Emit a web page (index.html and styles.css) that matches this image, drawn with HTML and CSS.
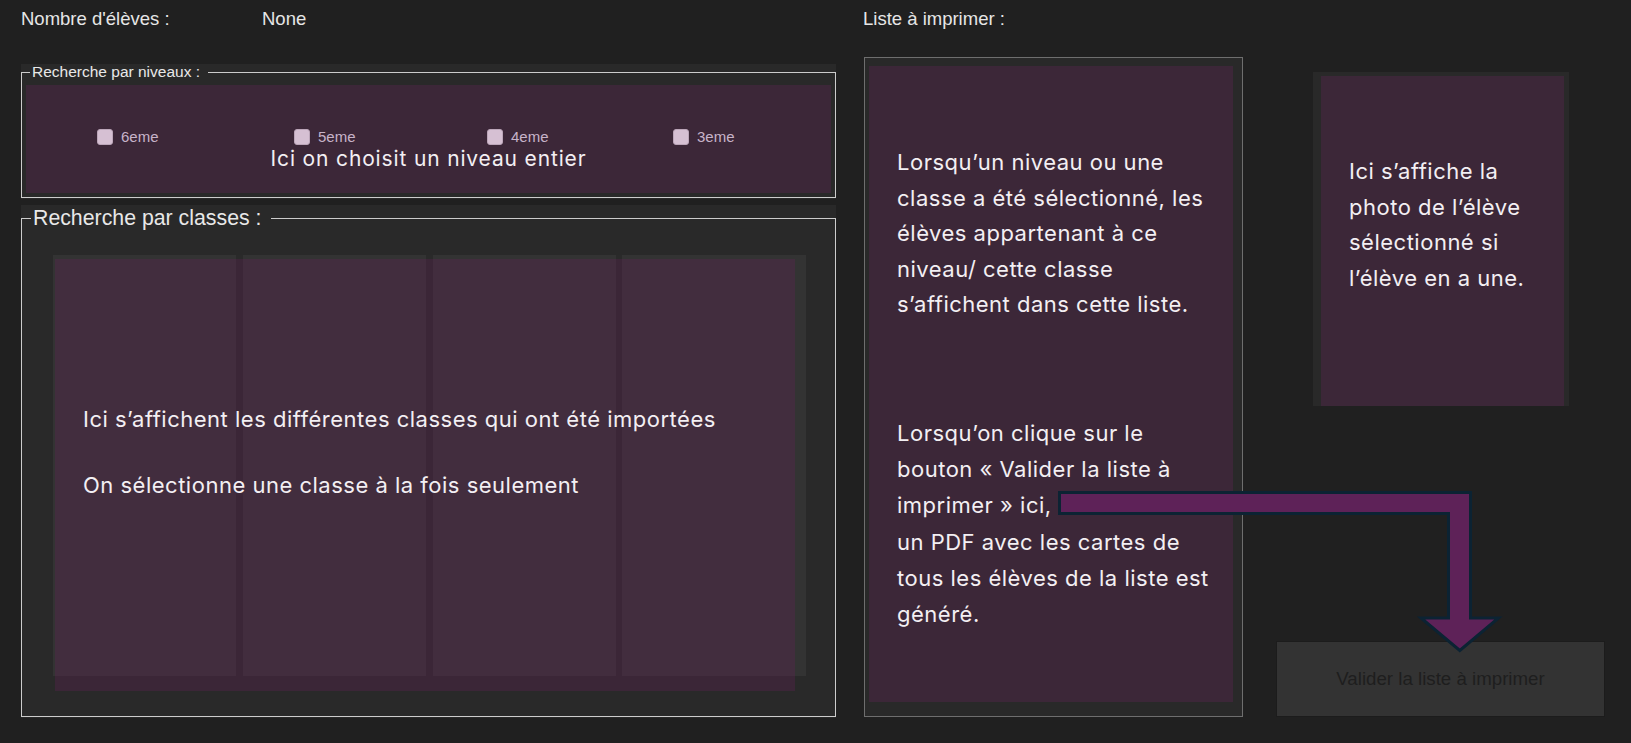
FILE: index.html
```html
<!DOCTYPE html>
<html lang="fr">
<head>
<meta charset="utf-8">
<title>Cartes élèves</title>
<link rel="stylesheet" href="styles.css">
</head>
<body>
<div class="app">
  <div class="left">
    <div class="info-row">
      <span class="info-label">Nombre d'élèves :</span>
      <span class="info-value">None</span>
    </div>
    <div class="section section-niv">
      <fieldset class="group group-niv">
        <legend class="legend-small">Recherche par niveaux :</legend>
        <div class="niv-panel">
          <div class="checks">
            <label class="check"><span class="box"></span>6eme</label>
            <label class="check"><span class="box"></span>5eme</label>
            <label class="check"><span class="box"></span>4eme</label>
            <label class="check"><span class="box"></span>3eme</label>
          </div>
          <p class="note note-niv">Ici on choisit un niveau entier</p>
        </div>
      </fieldset>
    </div>
    <div class="section section-cls">
      <fieldset class="group group-cls">
        <legend class="legend-big">Recherche par classes :</legend>
        <div class="class-list">
          <div class="class-col"></div>
          <div class="class-col"></div>
          <div class="class-col"></div>
          <div class="class-col"></div>
          <div class="class-overlay">
            <p class="note">Ici s’affichent les différentes classes qui ont été importées</p>
            <p class="note note-gap">On sélectionne une classe à la fois seulement</p>
          </div>
        </div>
      </fieldset>
    </div>
  </div>
  <div class="right">
    <div class="list-col">
      <div class="info-row info-row-right">
        <span class="info-label">Liste à imprimer :</span>
      </div>
      <div class="print-frame">
        <div class="print-panel">
          <p class="note">Lorsqu’un niveau ou une<br>classe a été sélectionné, les<br>élèves appartenant à ce<br>niveau/ cette classe<br>s’affichent dans cette liste.</p>
          <p class="note note-para">Lorsqu’on clique sur le<br>bouton « Valider la liste à<br>imprimer » ici,<br>un PDF avec les cartes de<br>tous les élèves de la liste est<br>généré.</p>
        </div>
      </div>
    </div>
    <div class="side-col">
      <div class="photo-frame">
        <div class="photo-panel">
          <p class="note">Ici s’affiche la<br>photo de l’élève<br>sélectionné si<br>l’élève en a une.</p>
        </div>
      </div>
      <button class="validate" type="button">Valider la liste à imprimer</button>
    </div>
  </div>
  <svg class="arrow" viewBox="0 0 1631 743" xmlns="http://www.w3.org/2000/svg" aria-hidden="true">
    <polygon points="1059.5,492.5 1470.5,492.5 1470.5,618 1498.5,618 1459.8,650.5 1421,618 1448.5,618 1448.5,513.5 1059.5,513.5" fill="#5e2258" stroke="#0c2333" stroke-width="3" stroke-linejoin="miter"/>
  </svg>
</div>
</body>
</html>
```

FILE: styles.css
```css
* { box-sizing: border-box; }
html, body { margin: 0; padding: 0; }
body {
  background: #202020;
  width: 1631px;
  height: 743px;
  overflow: hidden;
  font-family: "Liberation Sans", Arial, sans-serif;
  color: #e6e6e6;
}
.app {
  position: relative;
  display: flex;
  align-items: flex-start;
  padding-left: 21px;
  height: 743px;
}
.left {
  width: 815px;
  display: flex;
  flex-direction: column;
}
.info-row {
  height: 64px;
  padding-top: 8px;
  font-size: 18.5px;
  line-height: 21px;
  display: flex;
}
.info-row-right { height: 57px; }
.info-label { width: 241px; }

.section { background: #292929; }
.section-niv { height: 135px; }
.section-cls { height: 513px; margin-top: 6px; }

.group {
  margin: 0;
  border: 1px solid #cccccc;
  min-width: 0;
}
.group-niv { padding: 5px 4px 4px 4px; height: 134px; }
.group-cls { padding: 24px 8px 40px 8px; height: 512px; }

.legend-small {
  font-size: 15.5px;
  line-height: 16px;
  padding: 0 8px 0 2px;
  margin-left: 4px;
  color: #e8e8e8;
}
.legend-big {
  font-size: 21.3px;
  line-height: 26px;
  padding: 0 10px 0 2px;
  margin-left: 1px;
  color: #e8e8e8;
}

.niv-panel {
  background: #3c2738;
  height: 108px;
  padding-top: 42px;
}
.checks {
  display: grid;
  grid-template-columns: 197px 193px 186px auto;
  padding-left: 71px;
  height: 20px;
}
.check {
  display: flex;
  align-items: center;
  gap: 8px;
  font-size: 15px;
  line-height: 20px;
  color: #c7b3c9;
}
.box {
  width: 16px;
  height: 16px;
  border-radius: 3px;
  background: #d6c0d3;
  border: 1px solid #bca6b9;
}

.note {
  margin: 0;
  font-family: Inter, "Open Sans", sans-serif;
  color: #f3eff3;
  font-size: 22px;
  line-height: 35.6px;
  white-space: nowrap;
  letter-spacing: 0.5px;
}
.note-niv {
  font-size: 21px;
  line-height: 24px;
  letter-spacing: 0.85px;
  text-align: center;
}

.class-list {
  position: relative;
  margin: 0 21.5px 0 23px;
  height: 421px;
  display: grid;
  grid-template-columns: repeat(4, 1fr);
  column-gap: 6.5px;
  background: #2a2a2a;
}
.class-col { background: #333333; }
.class-overlay {
  position: absolute;
  left: 2px;
  top: 4px;
  width: 740px;
  height: 432px;
  background: rgba(124, 29, 106, 0.22);
  padding: 145px 0 0 28px;
}
.class-overlay .note { line-height: 31.5px; }
.note-gap { margin-top: 34px; }

.right {
  display: flex;
  align-items: flex-start;
  margin-left: 27px;
}
.list-col {
  width: 380px;
  display: flex;
  flex-direction: column;
}
.print-frame {
  margin-left: 1px;
  width: 379px;
  height: 660px;
  border: 1px solid #6e6e6e;
  background: #292929;
  padding: 8px 9px 14px 4px;
}
.print-panel {
  background: #3c2738;
  height: 100%;
  padding: 79px 0 0 28px;
}
.note-para {
  margin-top: 92px;
  line-height: 36.2px;
}

.side-col {
  margin-left: 33px;
  width: 329px;
  height: 717px;
  display: flex;
  flex-direction: column;
}
.photo-frame {
  margin: 72px 0 0 37px;
  width: 256px;
  height: 334px;
  background: #292929;
  padding: 4px 5px 0 8px;
}
.photo-panel {
  background: #3c2738;
  height: 100%;
  padding: 78px 0 0 28px;
}
.validate {
  margin-top: auto;
  height: 76px;
  width: 329px;
  background: #333333;
  border: 1px solid #1c1c1c;
  color: #1e1e1e;
  font-family: "Liberation Sans", Arial, sans-serif;
  font-size: 18.7px;
  padding: 0;
}

.arrow {
  position: absolute;
  left: 0;
  top: 0;
  width: 1631px;
  height: 743px;
  pointer-events: none;
}
```
